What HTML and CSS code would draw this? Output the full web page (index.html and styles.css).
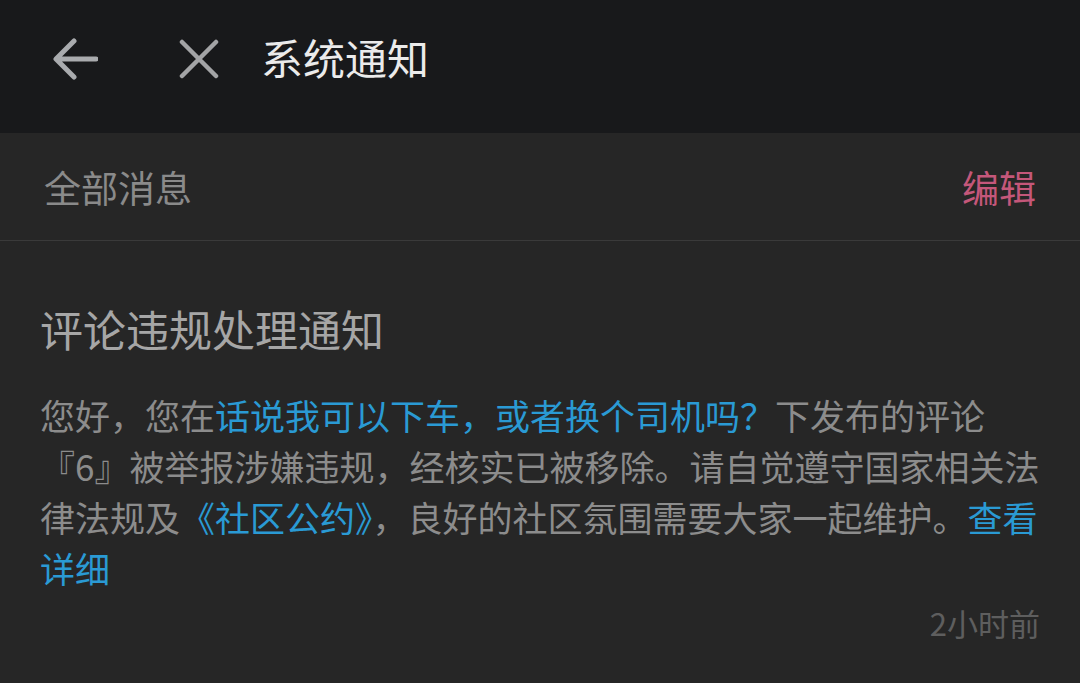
FILE: index.html
```html
<!DOCTYPE html>
<html lang="zh-CN">
<head>
    <meta charset="UTF-8">
    <meta name="viewport" content="width=device-width, initial-scale=1.0">
    <title>系统通知</title>
    <link rel="stylesheet" href="styles.css">
</head>
<body>
    <header class="top-bar">
        <button class="icon-btn back-btn" aria-label="返回">
            <svg width="46" height="44" viewBox="0 0 46 44">
                <path d="M44 22H5M22 4L4 22l18 18" fill="none" stroke="#a9abae" stroke-width="5" stroke-linecap="round" stroke-linejoin="round"/>
            </svg>
        </button>
        <button class="icon-btn close-btn" aria-label="关闭">
            <svg width="40" height="40" viewBox="0 0 40 40">
                <path d="M3 3L37 37M37 3L3 37" fill="none" stroke="#a3a4a6" stroke-width="4.5" stroke-linecap="round"/>
            </svg>
        </button>
        <h1 class="page-title">系统通知</h1>
    </header>

    <div class="filter-bar">
        <span class="filter-label">全部消息</span>
        <span class="edit-link">编辑</span>
    </div>

    <article class="notice">
        <h2 class="notice-title">评论违规处理通知</h2>
        <p class="notice-body">您好，您在<span class="link">话说我可以下车，或者换个司机吗？</span>下发布的评论『6』被举报涉嫌违规，经核实已被移除。请自觉遵守国家相关法律法规及<span class="link">《社区公约》</span>，良好的社区氛围需要大家一起维护。<span class="link">查看详细</span></p>
        <div class="notice-time">2小时前</div>
    </article>
</body>
</html>
```

FILE: styles.css
```css
body {
    margin: 0;
    background: #262626;
    font-family: "Noto Sans CJK SC", "Noto Sans", sans-serif;
    height: 683px;
    overflow: hidden;
}
.top-bar {
    height: 133px;
    background: #18191b;
    display: flex;
    align-items: center;
    padding: 0 0 16px 52px;
    box-sizing: border-box;
}
.icon-btn {
    background: none;
    border: none;
    padding: 0;
    display: flex;
    cursor: pointer;
}
.close-btn {
    margin-left: 81px;
}
.page-title {
    margin: -4px 0 0 42px;
    font-size: 42px;
    font-weight: 400;
    color: #ebebeb;
    line-height: 1;
}
.filter-bar {
    height: 108px;
    display: flex;
    align-items: center;
    justify-content: space-between;
    padding: 0 44px;
    border-bottom: 1px solid #3a3a3a;
    box-sizing: border-box;
}
.filter-label {
    font-size: 37px;
    color: #8a8a8a;
}
.edit-link {
    font-size: 37px;
    color: #c4577a;
}
.notice {
    padding: 57px 40px 0;
}
.notice-title {
    margin: 0;
    font-size: 43px;
    font-weight: 400;
    line-height: 60px;
    color: #a6a6a6;
}
.notice-body {
    margin: 31px 0 0;
    font-size: 35px;
    line-height: 51px;
    color: #8c8c8c;
}
.link {
    color: #2a9ad4;
}
.notice-time {
    margin-top: 10px;
    text-align: right;
    font-size: 31px;
    line-height: 40px;
    color: #5e5e5e;
}
```
